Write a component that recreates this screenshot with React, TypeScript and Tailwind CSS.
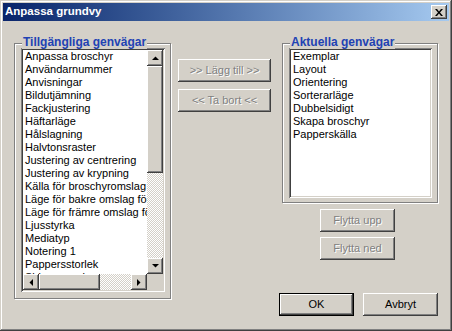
const raised =
  "shadow-[inset_-1px_-1px_#404040,inset_1px_1px_#fff,inset_-2px_-2px_#808080,inset_2px_2px_#d4d0c8]";
const defaultRaised =
  "border border-black shadow-[inset_-1px_-1px_#404040,inset_1px_1px_#fff,inset_-2px_-2px_#808080]";
const sunken =
  "shadow-[inset_1px_1px_#808080,inset_-1px_-1px_#fff,inset_2px_2px_#404040,inset_-2px_-2px_#d4d0c8]";
const track =
  "bg-[image:repeating-conic-gradient(#fff_0%_25%,#d4d0c8_0%_50%)] bg-size-[2px_2px]";

const available = [
  "Anpassa broschyr",
  "Användarnummer",
  "Anvisningar",
  "Bildutjämning",
  "Fackjustering",
  "Häftarläge",
  "Hålslagning",
  "Halvtonsraster",
  "Justering av centrering",
  "Justering av krypning",
  "Källa för broschyromslag",
  "Läge för bakre omslag för",
  "Läge för främre omslag för",
  "Ljusstyrka",
  "Mediatyp",
  "Notering 1",
  "Pappersstorlek",
  "Sidor per ark",
];

const current = [
  "Exemplar",
  "Layout",
  "Orientering",
  "Sorterarläge",
  "Dubbelsidigt",
  "Skapa broschyr",
  "Papperskälla",
];

function Button({
  label,
  disabled,
  isDefault,
  className,
}: {
  label: string;
  disabled?: boolean;
  isDefault?: boolean;
  className: string;
}) {
  return (
    <div
      className={`flex items-center justify-center h-[23px] ${isDefault ? defaultRaised : raised} ${className}`}
    >
      <span
        className={
          disabled
            ? "text-[#808080] [text-shadow:1px_1px_0_#fff]"
            : "text-black"
        }
      >
        {label}
      </span>
    </div>
  );
}

function Arrow({ dir }: { dir: "up" | "down" | "left" | "right" }) {
  const pts = {
    up: "0,4 7,4 3.5,0.5",
    down: "0,0 7,0 3.5,3.5",
    left: "4,0 4,7 0.5,3.5",
    right: "0,0 0,7 3.5,3.5",
  }[dir];
  const w = dir === "up" || dir === "down" ? 7 : 4;
  const h = dir === "up" || dir === "down" ? 4 : 7;
  return (
    <div className={`w-[16px] h-[16px] bg-[#d4d0c8] flex items-center justify-center ${raised}`}>
      <svg width={w} height={h} viewBox={`0 0 ${w} ${h}`}>
        <polygon points={pts} fill="#000" />
      </svg>
    </div>
  );
}

function GroupBox({
  title,
  className,
  children,
}: {
  title: string;
  className: string;
  children: React.ReactNode;
}) {
  return (
    <div
      className={`relative border border-[#808080] shadow-[inset_1px_1px_#fff,1px_1px_#fff] ${className}`}
    >
      <div className="absolute left-[7px] -top-[9px] px-[1px] bg-[#d4d0c8] text-[12px] leading-[14px] font-bold text-[#2142b4] whitespace-nowrap">
        {title}
      </div>
      {children}
    </div>
  );
}

export default function App() {
  return (
    <div
      className={`w-[452px] h-[331px] bg-[#d4d0c8] p-[3px] flex flex-col text-[11px] font-['Liberation_Sans',Arial,sans-serif] shadow-[inset_-1px_-1px_#404040,inset_1px_1px_#d4d0c8,inset_-2px_-2px_#808080,inset_2px_2px_#fff]`}
    >
      {/* Title bar */}
      <div className="h-[18px] flex items-center justify-between pl-[2px] pr-[2px] bg-gradient-to-r from-[#0a246a] to-[#a6caf0]">
        <span className="text-white font-bold text-[11.5px] leading-none">Anpassa grundvy</span>
        <div className={`w-[16px] h-[14px] bg-[#d4d0c8] flex items-center justify-center ${raised}`}>
          <svg width="8" height="7" viewBox="0 0 8 7">
            <path d="M0 0h2l2 2.5L6 0h2L5 3.5 8 7H6L4 4.5 2 7H0l3-3.5z" fill="#000" />
          </svg>
        </div>
      </div>

      {/* Body */}
      <div className="flex flex-1">
        {/* Left group */}
        <GroupBox title="Tillgängliga genvägar" className="ml-[11px] mt-[22px] w-[157px] h-[256px] pl-[6px] pt-[4px]">
          <div className={`w-[144px] h-[244px] bg-white p-[2px] ${sunken}`}>
            <div className="grid grid-cols-[124px_16px] grid-rows-[224px_16px] leading-[13px] text-black">
              <div className="overflow-hidden whitespace-nowrap pl-[2px]">
                {available.map((t) => (
                  <div key={t} className="h-[13px]">
                    {t}
                  </div>
                ))}
              </div>
              <div className={`flex flex-col ${track}`}>
                <Arrow dir="up" />
                <div className={`h-[107px] bg-[#d4d0c8] ${raised}`} />
                <div className="flex-1" />
                <Arrow dir="down" />
              </div>
              <div className={`flex ${track}`}>
                <Arrow dir="left" />
                <div className={`w-[61px] bg-[#d4d0c8] ${raised}`} />
                <div className="flex-1" />
                <Arrow dir="right" />
              </div>
              <div className="bg-[#d4d0c8]" />
            </div>
          </div>
        </GroupBox>

        {/* Middle buttons */}
        <div className="ml-[7px] mt-[38px] flex flex-col gap-[7px]">
          <Button label=">> Lägg till >>" disabled className="w-[93px]" />
          <Button label="<< Ta bort <<" disabled className="w-[93px]" />
        </div>

        {/* Right column */}
        <div className="ml-[8px] flex flex-col">
          <GroupBox title="Aktuella genvägar" className="ml-[3px] mt-[22px] w-[156px] h-[160px] pl-[6px] pt-[4px]">
            <div className={`w-[143px] h-[150px] bg-white p-[2px] ${sunken}`}>
              <div className="pl-[2px] leading-[13px] text-black whitespace-nowrap">
                {current.map((t) => (
                  <div key={t} className="h-[13px]">
                    {t}
                  </div>
                ))}
              </div>
            </div>
          </GroupBox>
          <div className="ml-[41px] mt-[6px] flex flex-col gap-[5px]">
            <Button label="Flytta upp" disabled className="w-[75px]" />
            <Button label="Flytta ned" disabled className="w-[75px]" />
          </div>
          <div className="mt-[33px] flex gap-[9px]">
            <Button label="OK" isDefault className="w-[75px]" />
            <Button label="Avbryt" className="w-[75px]" />
          </div>
        </div>
      </div>
    </div>
  );
}
